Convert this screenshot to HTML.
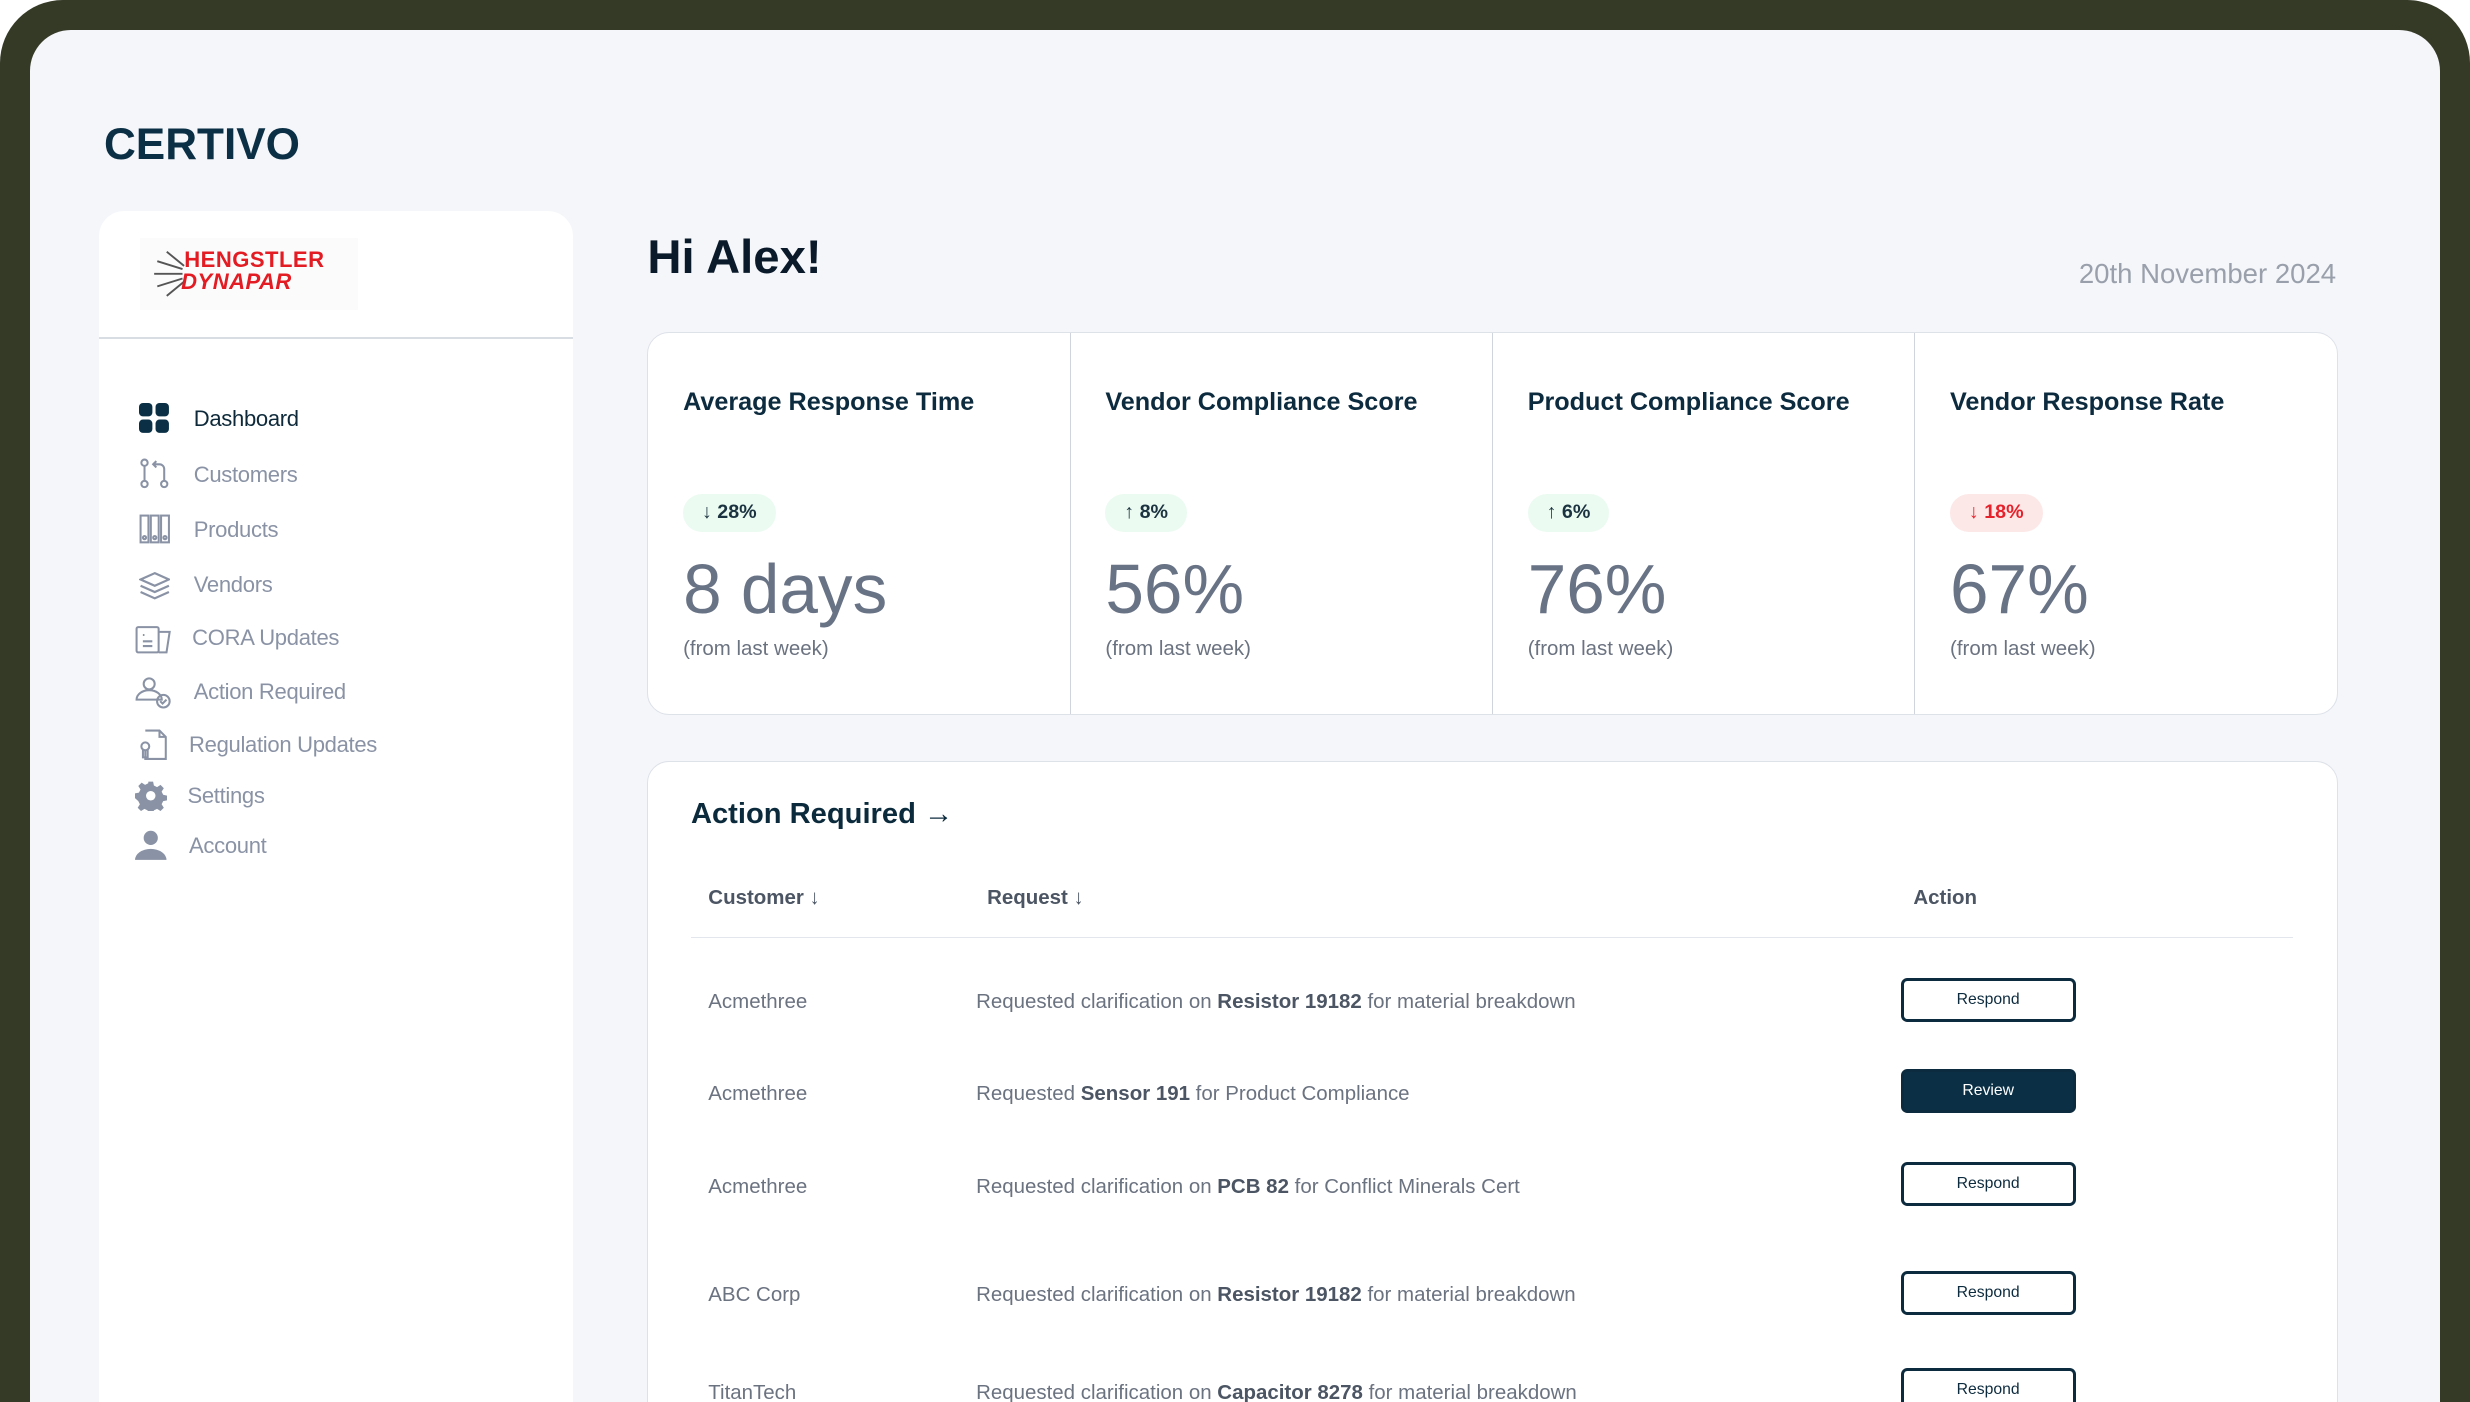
<!DOCTYPE html>
<html><head><meta charset="utf-8"><style>
*{margin:0;padding:0;box-sizing:border-box}
html,body{width:2470px;height:1402px;overflow:hidden;background:#fff}
#w{zoom:1.57526;width:1568px;height:890px;position:relative;overflow:hidden;font-family:"Liberation Sans",sans-serif}
.frame{position:absolute;left:0;top:0;width:1568px;height:890px;background:#353a27;border-radius:40px 40px 0 0}
.inner{position:absolute;left:19px;top:19px;width:1530px;height:871px;background:#f4f6fa;border-radius:26px 26px 0 0;overflow:hidden}
.a{position:absolute;white-space:nowrap}
.logo{left:47px;top:57px;font-size:28px;font-weight:bold;color:#0b3045;letter-spacing:0}
.side{left:44px;top:115px;width:301px;height:756px;background:#fff;border-radius:16px 16px 0 0}
.side .div{position:absolute;left:0;top:80px;width:301px;height:1px;background:#d8dce3}
.nav{position:absolute;font-size:14px;color:#8a93a5;white-space:nowrap;letter-spacing:-.2px}
.hi{left:392px;top:127px;font-size:30px;font-weight:bold;color:#0b1a2a}
.date{right:66px;top:145px;font-size:17.5px;color:#9aa0ab}
.stats{left:392px;top:192px;width:1073px;height:243px;background:#fff;border:1px solid #dde1e8;border-radius:14px;display:flex;overflow:hidden}
.col{flex:1;border-right:1px solid #cfd4dd;position:relative}
.col:last-child{border-right:none}
.t{position:absolute;left:22px;top:35px;font-size:16px;font-weight:bold;color:#0d2b3e;white-space:nowrap}
.b{position:absolute;left:22px;top:102px;height:24px;padding:0 12px;border-radius:12px;background:#ebfbf1;color:#1b3340;font-size:12.5px;font-weight:bold;line-height:24px}
.b.r{background:#fde8e8;color:#e5222c}
.v{position:absolute;left:22px;top:137px;font-size:44px;color:#697386}
.s{position:absolute;left:22px;top:193px;font-size:13px;color:#6b7280}
.act{left:392px;top:464px;width:1073px;height:420px;background:#fff;border:1px solid #dde1e8;border-radius:14px}
.at{position:absolute;left:27px;top:23px;font-size:18.5px;font-weight:bold;color:#0b2a3c}
.th{position:absolute;top:79px;font-size:13px;font-weight:bold;color:#4b5563}
.line{position:absolute;left:27px;top:111px;width:1017px;height:1px;background:#e3e6ec}
.td{position:absolute;font-size:13px;color:#6b7280;white-space:nowrap}
.td b{color:#4b5563}
.btn{position:absolute;left:795px;width:111px;height:28px;border:2px solid #0d2b3e;border-radius:4px;font-size:10px;color:#0d2b3e;text-align:center;line-height:24px;background:#fff}
.btn.f{background:#0b3045;color:#fff}
</style></head><body><div id="w">
<div class="frame"></div>
<div class="inner">
<div class="a logo">CERTIVO</div>
<div class="a side">
 <div style="position:absolute;left:26px;top:17px;width:138px;height:46px;background:#fbfbfb">
  <svg width="24" height="34" style="position:absolute;left:7px;top:6px"><g stroke="#555" stroke-width="1.2"><line x1="20" y1="17" x2="2" y2="17"/><line x1="20" y1="14" x2="4" y2="9"/><line x1="20" y1="20" x2="4" y2="25"/><line x1="21" y1="12" x2="10" y2="3"/><line x1="21" y1="22" x2="10" y2="31"/></g></svg>
  <div style="position:absolute;left:28px;top:6px;font-weight:bold;font-size:14px;color:#e31b23;letter-spacing:.3px">HENGSTLER</div>
  <div style="position:absolute;left:26px;top:20px;font-weight:bold;font-style:italic;font-size:14px;color:#e31b23;letter-spacing:.3px">DYNAPAR</div>
 </div>
 <div class="div"></div>
</div>
<div class="a" style="left:0;top:0">
 <svg class="a" style="left:69px;top:237px" width="20" height="20"><rect x="0" y="0" width="8.5" height="8.5" rx="2.5" fill="#0b3045"/><rect x="10.5" y="0" width="8.5" height="8.5" rx="2.5" fill="#0b3045"/><rect x="0" y="10.5" width="8.5" height="8.5" rx="2.5" fill="#0b3045"/><rect x="10.5" y="10.5" width="8.5" height="8.5" rx="2.5" fill="#0b3045"/></svg>
 <div class="nav" style="left:104px;top:239px;color:#0e2a3a">Dashboard</div>
 <svg class="a" style="left:69px;top:272px" width="20" height="20" fill="none" stroke="#8a93a5" stroke-width="1.3"><circle cx="3.5" cy="3" r="2"/><circle cx="3.5" cy="16.5" r="2"/><line x1="3.5" y1="5" x2="3.5" y2="14.5"/><circle cx="16" cy="16.5" r="2"/><path d="M16 14.5V7a3 3 0 0 0-3-3H9M11 2L9 4l2 2"/></svg>
 <div class="nav" style="left:104px;top:274px">Customers</div>
 <svg class="a" style="left:69px;top:307px" width="20" height="20" fill="none" stroke="#8a93a5" stroke-width="1.3"><rect x="1" y="1" width="5" height="17"/><rect x="7.5" y="1" width="5" height="17"/><rect x="14" y="1" width="5" height="17"/><circle cx="3.5" cy="15" r="1"/><circle cx="10" cy="15" r="1"/><circle cx="16.5" cy="15" r="1"/></svg>
 <div class="nav" style="left:104px;top:309px">Products</div>
 <svg class="a" style="left:69px;top:343px" width="20" height="20" fill="none" stroke="#8a93a5" stroke-width="1.4"><path d="M10 2L19 6 10 10 1 6Z"/><path d="M1 10l9 4 9-4M1 14l9 4 9-4"/></svg>
 <div class="nav" style="left:104px;top:344px">Vendors</div>
 <svg class="a" style="left:67px;top:377px" width="24" height="20" fill="none" stroke="#8a93a5" stroke-width="1.3"><rect x="1" y="2" width="14" height="16" rx="1"/><path d="M15 5h7l-2 13h-5M5 7h1M5 11h6M5 14h6"/></svg>
 <div class="nav" style="left:103px;top:378px">CORA Updates</div>
 <svg class="a" style="left:67px;top:410px" width="24" height="22" fill="none" stroke="#8a93a5" stroke-width="1.3"><circle cx="9" cy="5" r="3.5"/><path d="M1 15a8 6 0 0 1 16 0z"/><circle cx="18" cy="16" r="4"/><path d="M16 16l1.5 1.5 2.5-2.5"/></svg>
 <div class="nav" style="left:104px;top:412px">Action Required</div>
 <svg class="a" style="left:69px;top:444px" width="20" height="20" fill="none" stroke="#8a93a5" stroke-width="1.3"><path d="M4 1h9l4 4v14H4V14M13 1v4h4"/><circle cx="4" cy="11" r="2.5"/><path d="M2.5 13v5h3v-5"/></svg>
 <div class="nav" style="left:101px;top:446px">Regulation Updates</div>
 <svg class="a" style="left:67px;top:476px" width="20" height="20"><path fill="#8a93a5" d="M8.5 1h3l.5 2.5 2 1 2.2-1.4 2.1 2.1-1.4 2.2 1 2 2.5.5v3l-2.5.5-1 2 1.4 2.2-2.1 2.1-2.2-1.4-2 1-.5 2.5h-3l-.5-2.5-2-1-2.2 1.4-2.1-2.1 1.4-2.2-1-2L0 11.5v-3L2.5 8l1-2-1.4-2.2 2.1-2.1L6.4 3.1l2-1z"/><circle cx="10" cy="10" r="3" fill="#fff"/></svg>
 <div class="nav" style="left:100px;top:478px">Settings</div>
 <svg class="a" style="left:67px;top:508px" width="20" height="20"><circle cx="10" cy="5" r="4.5" fill="#8a93a5"/><path d="M0 19a10 7 0 0 1 20 0z" fill="#8a93a5"/></svg>
 <div class="nav" style="left:101px;top:510px">Account</div>
</div>
<div class="a hi">Hi Alex!</div>
<div class="a date">20th November 2024</div>
<div class="a stats">
 <div class="col"><div class="t">Average Response Time</div><div class="b">↓ 28%</div><div class="v">8 days</div><div class="s">(from last week)</div></div>
 <div class="col"><div class="t">Vendor Compliance Score</div><div class="b">↑ 8%</div><div class="v">56%</div><div class="s">(from last week)</div></div>
 <div class="col"><div class="t">Product Compliance Score</div><div class="b">↑ 6%</div><div class="v">76%</div><div class="s">(from last week)</div></div>
 <div class="col"><div class="t">Vendor Response Rate</div><div class="b r">↓ 18%</div><div class="v">67%</div><div class="s">(from last week)</div></div>
</div>
<div class="a act">
 <div class="at">Action Required →</div>
 <div class="th" style="left:38px">Customer ↓</div>
 <div class="th" style="left:215px">Request ↓</div>
 <div class="th" style="left:803px">Action</div>
 <div class="line"></div>
 <div class="td" style="left:38px;top:145px">Acmethree</div><div class="td" style="left:208px;top:145px">Requested clarification on <b>Resistor 19182</b> for material breakdown</div><div class="btn" style="top:137px">Respond</div>
 <div class="td" style="left:38px;top:203px">Acmethree</div><div class="td" style="left:208px;top:203px">Requested <b>Sensor 191</b> for Product Compliance</div><div class="btn f" style="top:195px">Review</div>
 <div class="td" style="left:38px;top:262px">Acmethree</div><div class="td" style="left:208px;top:262px">Requested clarification on <b>PCB 82</b> for Conflict Minerals Cert</div><div class="btn" style="top:254px">Respond</div>
 <div class="td" style="left:38px;top:331px">ABC Corp</div><div class="td" style="left:208px;top:331px">Requested clarification on <b>Resistor 19182</b> for material breakdown</div><div class="btn" style="top:323px">Respond</div>
 <div class="td" style="left:38px;top:393px">TitanTech</div><div class="td" style="left:208px;top:393px">Requested clarification on <b>Capacitor 8278</b> for material breakdown</div><div class="btn" style="top:385px">Respond</div>
</div>
</div>
</div></body></html>
